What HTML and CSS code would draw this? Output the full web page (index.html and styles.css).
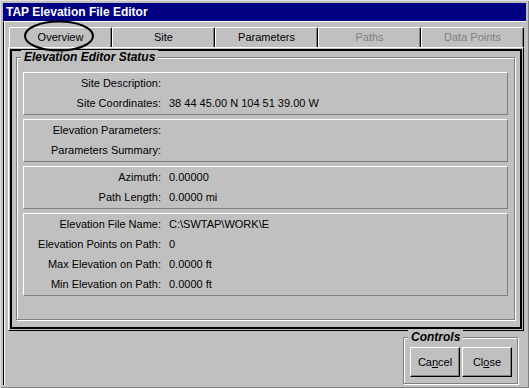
FILE: index.html
```html
<!DOCTYPE html>
<html>
<head>
    <link rel="stylesheet" href="styles.css">
</head>
<body>
    <div class="window">
        <div class="titlebar">TAP Elevation File Editor</div>
        <div class="client">
            <div class="tabs">
                <div class="tab active">Overview</div>
                <div class="tab">Site</div>
                <div class="tab">Parameters</div>
                <div class="tab disabled">Paths</div>
                <div class="tab disabled">Data Points</div>
            </div>
            <div class="tab-panel">
                <div class="page">
                    <div class="group status">
                        <span class="legend">Elevation Editor Status</span>
                        <div class="box">
                            <div class="row"><span class="label">Site Description:</span><span class="value"></span></div>
                            <div class="row"><span class="label">Site Coordinates:</span><span class="value">38 44 45.00 N 104 51 39.00 W</span></div>
                        </div>
                        <div class="box">
                            <div class="row"><span class="label">Elevation Parameters:</span><span class="value"></span></div>
                            <div class="row"><span class="label">Parameters Summary:</span><span class="value"></span></div>
                        </div>
                        <div class="box">
                            <div class="row"><span class="label">Azimuth:</span><span class="value">0.00000</span></div>
                            <div class="row"><span class="label">Path Length:</span><span class="value">0.0000 mi</span></div>
                        </div>
                        <div class="box">
                            <div class="row"><span class="label">Elevation File Name:</span><span class="value">C:\SWTAP\WORK\E</span></div>
                            <div class="row"><span class="label">Elevation Points on Path:</span><span class="value">0</span></div>
                            <div class="row"><span class="label">Max Elevation on Path:</span><span class="value">0.0000 ft</span></div>
                            <div class="row"><span class="label">Min Elevation on Path:</span><span class="value">0.0000 ft</span></div>
                        </div>
                    </div>
                </div>
            </div>
            <div class="footer">
                <div class="group controls">
                    <span class="legend">Controls</span>
                    <button class="btn">Ca<u>n</u>cel</button>
                    <button class="btn">Cl<u>o</u>se</button>
                </div>
            </div>
        </div>
        <!-- hand drawn marker round the Overview tab -->
        <svg class="marker" width="72" height="34" viewBox="0 0 72 34">
            <ellipse cx="36" cy="17" rx="34" ry="14.5" fill="none" stroke="#000" stroke-width="2"/>
        </svg>
    </div>
</body>
</html>
```

FILE: styles.css
```css
* {
    box-sizing: border-box;
    margin: 0;
}

body {
    background-color: #c0c0c0;
    font-family: "Liberation Sans", Arial, sans-serif;
    font-size: 11px;
    color: #000;
}

.window {
    position: relative;
    width: 529px;
    height: 388px;
    display: flex;
    flex-direction: column;
    padding: 3px 3px 3px 3px;
    background-color: #c0c0c0;
    box-shadow: inset 1px 1px #dfdfdf, inset -1px -1px #808080;
}

.titlebar {
    height: 18px;
    background-color: #000080;
    color: #fff;
    font-weight: bold;
    font-size: 12px;
    line-height: 18px;
    padding-left: 3px;
}

.client {
    flex: 1;
    display: flex;
    flex-direction: column;
    padding: 5px 2px 0 4px;
    border-top: 1px solid #fff;
    border-left: 1px solid #000;
    box-shadow: inset 1px 0 #fff;
}

.tabs {
    display: flex;
    height: 20px;
    padding-left: 1px;
}

.tab {
    width: 103px;
    height: 20px;
    text-align: center;
    line-height: 19px;
    border-top: 1px solid #fff;
    border-left: 1px solid #fff;
    border-right: 1px solid #000;
    box-shadow: inset -1px 0 #808080;
    border-top-left-radius: 2px;
    border-top-right-radius: 2px;
}

.tab.disabled {
    color: #808080;
}

.tab-panel {
    height: 284px;
    border-top: 1px solid #fff;
    border-left: 1px solid #fff;
    border-right: 1px solid #000;
    border-bottom: 1px solid #000;
    padding: 1px;
}

.page {
    height: 100%;
    border: 2px solid #000;
    padding: 6px 5px 7px 4px;
}

.group {
    position: relative;
    border: 1px solid #808080;
    box-shadow: 1px 1px #fff, inset 1px 1px #fff;
}

.legend {
    position: absolute;
    top: -8px;
    left: 4px;
    padding: 0 3px;
    background-color: #c0c0c0;
    font-weight: bold;
    font-style: italic;
    font-size: 12px;
    line-height: 14px;
}

.status {
    height: 100%;
    padding: 14px 6px 0 6px;
}

.box {
    border-top: 1px solid #fff;
    border-left: 1px solid #fff;
    border-right: 1px solid #808080;
    border-bottom: 1px solid #808080;
    padding-bottom: 1px;
    margin-bottom: 4px;
}

.row {
    display: flex;
    height: 20px;
    line-height: 20px;
}

.label {
    width: 137px;
    text-align: right;
}

.value {
    padding-left: 8px;
}

.footer {
    flex: 1;
    display: flex;
    justify-content: flex-end;
    align-items: flex-end;
    padding: 0 6px 1px 0;
}

.controls {
    width: 115px;
    height: 47px;
    display: flex;
    gap: 2px;
    padding: 9px 0 0 6px;
}

.btn {
    width: 50px;
    height: 30px;
    font-family: "Liberation Sans", Arial, sans-serif;
    font-size: 11px;
    background-color: #c0c0c0;
    border-top: 1px solid #fff;
    border-left: 1px solid #fff;
    border-right: 1px solid #000;
    border-bottom: 1px solid #000;
    box-shadow: inset -1px -1px #808080;
    padding: 0;
}

.marker {
    position: absolute;
    left: 23px;
    top: 19px;
}
```
